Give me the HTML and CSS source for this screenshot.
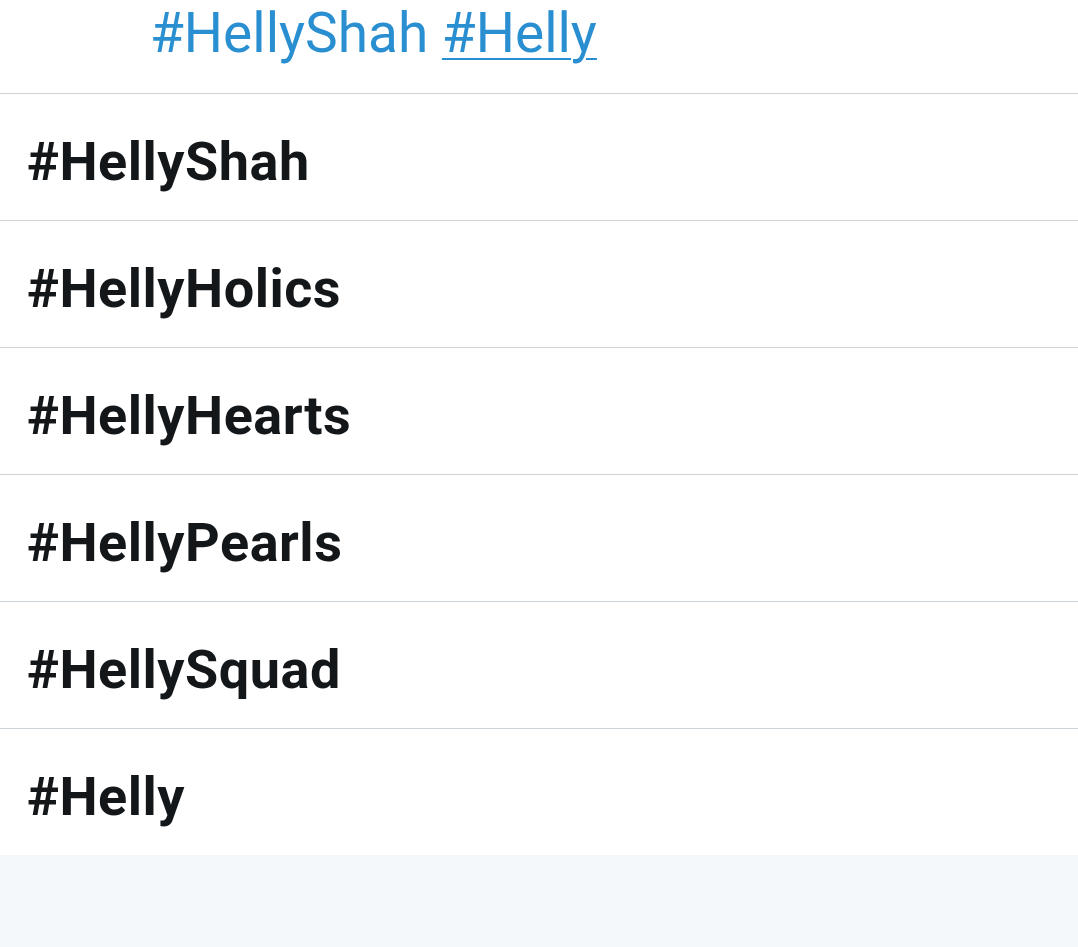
FILE: index.html
```html
<!DOCTYPE html>
<html lang="en">

<head>
    <meta charset="UTF-8">
    <meta name="viewport" content="width=device-width, initial-scale=1.0">
    <title>Hashtags</title>
    <link rel="stylesheet" href="styles.css">
</head>

<body>
    <div class="tweet-tail">
        <a href="#" class="hashtag">#HellyShah</a> <a href="#" class="hashtag active">#Helly</a>
    </div>

    <ul class="suggestions">
        <li class="tag">#HellyShah</li>
        <li class="tag">#HellyHolics</li>
        <li class="tag">#HellyHearts</li>
        <li class="tag">#HellyPearls</li>
        <li class="tag">#HellySquad</li>
        <li class="tag">#Helly</li>
    </ul>
</body>

</html>
```

FILE: styles.css
```css
* {
    margin: 0;
    padding: 0;
    box-sizing: border-box;
}

body {
    font-family: Roboto, "Noto Sans", sans-serif;
    background-color: #f5f8fa;
    height: 100vh;
}

.tweet-tail {
    background-color: #fff;
    height: 93px;
    padding-left: 150px;
    font-size: 55px;
    line-height: 66px;
}

.hashtag {
    color: #2a8fd1;
    text-decoration: none;
}

.hashtag.active {
    text-decoration: underline;
    text-decoration-thickness: 2px;
    text-underline-offset: 6px;
}

.suggestions {
    list-style: none;
    background-color: #fff;
}

.tag {
    height: 127px;
    display: flex;
    align-items: center;
    padding-left: 27px;
    padding-top: 8px;
    border-top: 1px solid #ccd4d9;
    font-size: 54px;
    font-weight: 700;
    letter-spacing: 0.5px;
    color: #14171a;
}
```
